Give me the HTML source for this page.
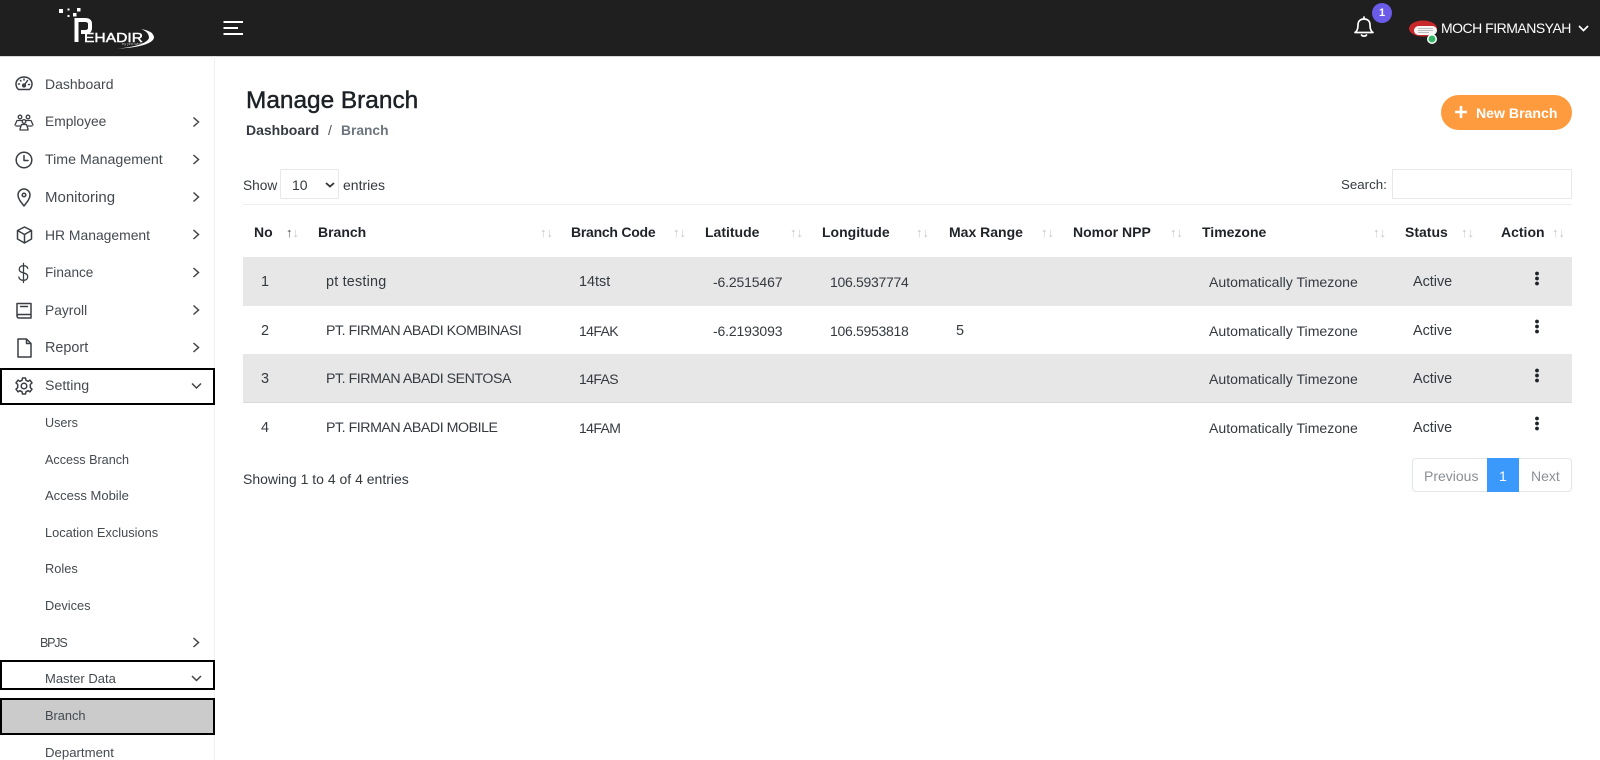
<!DOCTYPE html>
<html><head><meta charset="utf-8"><title>Manage Branch</title>
<style>
html,body{margin:0;padding:0;width:1600px;height:760px;overflow:hidden;background:#fff;font-family:"Liberation Sans",sans-serif;font-size:14.4px;color:#343a40}
body{filter:blur(.3px)}
.a{position:absolute}
.t{position:absolute;white-space:nowrap;line-height:20px;height:20px}
.s{color:#444a50}
.th{font-weight:bold;color:#1f2328;font-size:14px}
.ar{position:absolute;white-space:nowrap;color:#c3c7cb;font-size:13px;line-height:20px;letter-spacing:0;top:223px}
.pt{font-size:14.2px;letter-spacing:-.46px}
.tz{font-size:14.1px}
.nm{font-size:14px;letter-spacing:-.3px}
.la{font-size:14px;letter-spacing:-.15px}
.cd{font-size:14px;letter-spacing:-.6px}
svg{position:absolute;overflow:visible}
.i{fill:none;stroke:#3a3f44;stroke-width:1.5;stroke-linecap:round;stroke-linejoin:round}
</style></head><body>
<div class="a" style="left:0;top:0;width:1600px;height:57px;background:#1f1f1f;border-bottom:1px solid #d8d8d8;box-sizing:border-box"></div>
<svg style="left:0;top:0" width="260" height="56">
<g fill="#fff"><rect x="59" y="9" width="4" height="4"/><rect x="67.500" y="8.500" width="2" height="2"/><rect x="77" y="8" width="3.500" height="3.500"/><rect x="67.500" y="15" width="2" height="2"/><rect x="73" y="13" width="3.500" height="3.500"/></g>
<path d="M76.500 42V20H85Q90 20 90 24V28Q90 32 85 32H81" fill="none" stroke="#fff" stroke-width="4"/>
<text x="84" y="42" font-family="Liberation Sans" font-size="12.500" fill="#fff" stroke="#fff" stroke-width=".4" textLength="59" lengthAdjust="spacingAndGlyphs">EHADIR</text>
<path d="M141 29Q154 31 154 38Q151 47 115 49Q146 46 149 38Q149 32 141 29Z" fill="#fff"/>
<text x="122" y="45" font-family="Liberation Sans" font-size="4" fill="#bbb">by pro-wish</text>
<path d="M223.500 22H243M223.500 28H238M223.500 34H243" stroke="#fff" stroke-width="2" fill="none"/>
</svg>
<svg style="left:1354px;top:16px" width="20" height="22" viewBox="0 0 20 22"><path class="i" style="stroke:#fff;stroke-width:1.700" d="M1 16.500C3.500 15 4 12.500 4 9C4 5 6.500 3 10 3C13.500 3 16 5 16 9C16 12.500 16.500 15 19 16.500ZM10 1V3M7.500 19C8.500 20.500 11.500 20.500 12.500 19"/></svg>
<div class="a" style="left:1372px;top:3px;width:20px;height:20px;border-radius:50%;background:#6a5ce8;color:#fff;font-weight:bold;font-size:11px;line-height:20px;text-align:center">1</div>
<svg style="left:1409px;top:20px" width="30" height="24"><ellipse cx="14" cy="8.500" rx="14" ry="8" fill="#c8282a"/><rect x="5" y="6" width="23" height="9" rx="4.500" fill="#f6f6f6"/><path d="M9 8.500H24M9 10.500H24M9 12.500H20" stroke="#aaa" stroke-width=".8"/><circle cx="23" cy="19" r="5" fill="#fff"/><circle cx="23" cy="19" r="3.500" fill="#35b667"/></svg>
<div class="t" style="left:1441px;top:18px;color:#fff;font-size:14px;letter-spacing:-.5px">MOCH FIRMANSYAH</div>
<svg style="left:1578px;top:25px" width="11" height="7"><path d="M1 1L5.500 5.500L10 1" stroke="#fff" stroke-width="1.700" fill="none"/></svg>

<div class="a" style="left:214px;top:56px;width:1px;height:704px;background:#f0f0f0"></div>
<div class="a" style="left:0;top:368px;width:215px;height:37px;border:2px solid #000;box-sizing:border-box"></div>
<div class="a" style="left:0;top:660px;width:215px;height:30px;border:2px solid #000;box-sizing:border-box"></div>
<div class="a" style="left:0;top:698px;width:215px;height:37px;border:2px solid #000;box-sizing:border-box;background:#cbcbcb"></div>

<div class="t s" style="left:45px;top:74px;font-size:14px">Dashboard</div>
<div class="t s" style="left:45px;top:112px;font-size:13.8px">Employee</div>
<div class="t s" style="left:45px;top:150px;font-size:14.2px">Time Management</div>
<div class="t s" style="left:45px;top:188px;font-size:15px">Monitoring</div>
<div class="t s" style="left:45px;top:225px;font-size:13.9px">HR Management</div>
<div class="t s" style="left:45px;top:263px;font-size:13.6px">Finance</div>
<div class="t s" style="left:45px;top:301px;font-size:13.8px">Payroll</div>
<div class="t s" style="left:45px;top:338px;font-size:14.4px">Report</div>
<div class="t s" style="left:45px;top:376px;font-size:14.2px">Setting</div>
<div class="t s" style="left:45px;top:413px;font-size:12.6px">Users</div>
<div class="t s" style="left:45px;top:450px;font-size:12.6px">Access Branch</div>
<div class="t s" style="left:45px;top:486px;font-size:13px">Access Mobile</div>
<div class="t s" style="left:45px;top:523px;font-size:12.8px">Location Exclusions</div>
<div class="t s" style="left:45px;top:559px;font-size:12.8px">Roles</div>
<div class="t s" style="left:45px;top:596px;font-size:12.8px">Devices</div>
<div class="t s" style="left:40px;top:633px;font-size:12.5px;letter-spacing:-1.2px">BPJS</div>
<div class="t s" style="left:45px;top:669px;font-size:13px">Master Data</div>
<div class="t s" style="left:45px;top:706px;font-size:12.8px">Branch</div>
<div class="t s" style="left:45px;top:743px;font-size:13.2px">Department</div>

<svg style="left:15px;top:74px" width="18" height="18" viewBox="0 0 18 18"><path class="i" d="M3.500 15.500C1.800 14 1 12 1 10C1 6 4.500 3 9 3C13.500 3 17 6 17 10C17 12 16.200 14 14.500 15.500ZM9 11.500L12.500 6.500M3.500 10H4.500M13.500 10.500H14.500M9 5V6M5.500 6.500L6 7"/><circle cx="9" cy="11.500" r="1.400" class="i"/></svg>
<svg style="left:14px;top:114px" width="20" height="17" viewBox="0 0 20 17"><g class="i" style="stroke-width:1.300"><circle cx="6" cy="3" r="1.800"/><circle cx="14" cy="3" r="1.800"/><circle cx="10" cy="7.500" r="1.800"/><path d="M1 11L3 6.500H8M12 6.500H17L19 11M2 12H6M14 12H18M6 15L7.500 10.500H12.500L14 15V16H6Z"/></g></svg>
<svg style="left:15px;top:151px" width="18" height="18" viewBox="0 0 18 18"><circle cx="9" cy="9" r="7.800" class="i"/><path class="i" d="M9 4.500V9.500H13"/></svg>
<svg style="left:17px;top:188px" width="14" height="19" viewBox="0 0 14 19"><path class="i" d="M7 18C3.500 13.500 1 10.500 1 7A6 6 0 0 1 13 7C13 10.500 10.500 13.500 7 18Z"/><circle class="i" cx="7" cy="7" r="1.800"/></svg>
<svg style="left:16px;top:226px" width="17" height="18" viewBox="0 0 17 18"><path class="i" d="M8.500 1L15.500 4.500V13L8.500 17L1.500 13V4.500ZM1.500 4.500L8.500 8.500L15.500 4.500M8.500 8.500V17"/></svg>
<svg style="left:18px;top:263px" width="11" height="20" viewBox="0 0 13 22" preserveAspectRatio="none"><path class="i" d="M11.500 6C11 3.800 9 3 6.500 3C3.500 3 1.500 4.500 1.500 7C1.500 12 11.500 9.500 11.500 15C11.500 17.500 9.500 19 6.500 19C3.500 19 1.500 17.800 1 15.500M6.500 .5V21.500"/></svg>
<svg style="left:16px;top:302px" width="16" height="17" viewBox="0 0 16 17"><path class="i" d="M1 13.500V1.500H15V16H3A2 2 0 0 1 1 14A2 2 0 0 1 3 12.500H15M4.500 4.500H11.500"/></svg>
<svg style="left:17px;top:338px" width="15" height="20" viewBox="0 0 15 20"><path class="i" d="M1 1H9.500L14 5.500V19H1ZM9.500 1V5.500H14"/></svg>
<svg style="left:15px;top:377px" width="18" height="18" viewBox="0 0 18 18"><circle class="i" cx="9" cy="9" r="2.800"/><path class="i" d="M7.500 1H10.500L11 3.300L13 4.300L15 3.200L17 5.800L15.300 7.500V10.500L17 12.200L15 14.800L13 13.700L11 14.700L10.500 17H7.500L7 14.700L5 13.700L3 14.800L1 12.200L2.700 10.500V7.500L1 5.800L3 3.200L5 4.300L7 3.300Z"/></svg>

<svg style="left:0;top:0" width="215" height="760"><g fill="none" stroke="#444" stroke-width="1.500"><path d="M193.500 117.500L198.500 122L193.500 126.500M193.500 155L198.500 159.500L193.500 164M193.500 192.500L198.500 197L193.500 201.500M193.500 230L198.500 234.500L193.500 239M193.500 268L198.500 272.500L193.500 277M193.500 305.500L198.500 310L193.500 314.500M193.500 343L198.500 347.500L193.500 352M193.500 638L198.500 642.500L193.500 647M192 383.500L196.500 388L201 383.500M192 676L196.500 680.500L201 676"/></g></svg>

<div class="t" style="left:246px;top:90px;font-size:24.4px;line-height:22px;height:22px;color:#1c2126;-webkit-text-stroke:.45px #1c2126">Manage Branch</div>
<div class="t" style="left:246px;top:120px;font-weight:bold;font-size:14px;color:#343a40">Dashboard</div>
<div class="t" style="left:328px;top:120px;color:#555;font-size:14px">/</div>
<div class="t" style="left:341px;top:121px;font-weight:bold;font-size:13.8px;color:#6c757d">Branch</div>

<div class="a" style="left:1441px;top:95px;width:131px;height:35px;border-radius:18px;background:#fd9b3e"></div>
<svg style="left:1455px;top:106px" width="12" height="12"><path d="M6 0V12M0 6H12" stroke="#fff" stroke-width="2.600"/></svg>
<div class="t" style="left:1476px;top:103px;color:#fff;font-weight:bold;font-size:14.1px">New Branch</div>

<div class="t" style="left:243px;top:176px;font-size:13.7px">Show</div>
<div class="a" style="left:280px;top:169px;width:59px;height:30px;border:1px solid #e6e8ea;box-sizing:border-box;border-radius:2px"></div>
<div class="t" style="left:292px;top:175px;font-size:14px">10</div>
<svg style="left:325px;top:182px" width="10" height="6"><path d="M1 1L5 4.500L9 1" stroke="#333" stroke-width="1.800" fill="none"/></svg>
<div class="t" style="left:343px;top:175px;font-size:14px">entries</div>
<div class="t" style="left:1341px;top:175px;font-size:13.3px">Search:</div>
<div class="a" style="left:1392px;top:169px;width:180px;height:30px;border:1px solid #e6e8ea;box-sizing:border-box"></div>
<div class="a" style="left:243px;top:204px;width:1329px;height:1px;background:#eceeef"></div>

<div class="t th" style="left:254px;top:222px">No</div>
<div class="t th" style="left:318px;top:222px">Branch</div>
<div class="t th" style="left:571px;top:222px;font-size:14px;letter-spacing:-.25px">Branch Code</div>
<div class="t th" style="left:705px;top:222px">Latitude</div>
<div class="t th" style="left:822px;top:222px">Longitude</div>
<div class="t th" style="left:949px;top:222px">Max Range</div>
<div class="t th" style="left:1073px;top:222px">Nomor NPP</div>
<div class="t th" style="left:1202px;top:222px">Timezone</div>
<div class="t th" style="left:1405px;top:222px">Status</div>
<div class="t th" style="left:1501px;top:222px">Action</div>
<div class="ar" style="left:286px"><span style="color:#555">↑</span>↓</div>
<div class="ar" style="left:540px">↑↓</div>
<div class="ar" style="left:673px">↑↓</div>
<div class="ar" style="left:790px">↑↓</div>
<div class="ar" style="left:916px">↑↓</div>
<div class="ar" style="left:1041px">↑↓</div>
<div class="ar" style="left:1170px">↑↓</div>
<div class="ar" style="left:1373px">↑↓</div>
<div class="ar" style="left:1461px">↑↓</div>
<div class="ar" style="left:1552px">↑↓</div>

<div class="a" style="left:243px;top:257px;width:1329px;height:49px;background:#e7e7e7"></div>
<div class="a" style="left:243px;top:354px;width:1329px;height:49px;background:#e7e7e7;border-bottom:1px solid #d8dbde;box-sizing:border-box"></div>

<div class="t" style="left:261px;top:272px">1</div>
<div class="t" style="left:326px;top:272px;font-size:14.4px;letter-spacing:.2px">pt testing</div>
<div class="t" style="left:579px;top:272px">14tst</div>
<div class="t la" style="left:713px;top:272px">-6.2515467</div>
<div class="t nm" style="left:830px;top:272px">106.5937774</div>
<div class="t tz" style="left:1209px;top:272px">Automatically Timezone</div>
<div class="t" style="left:1413px;top:272px">Active</div>

<div class="t" style="left:261px;top:321px">2</div>
<div class="t pt" style="left:326px;top:321px">PT. FIRMAN ABADI KOMBINASI</div>
<div class="t cd" style="left:579px;top:321px">14FAK</div>
<div class="t la" style="left:713px;top:321px">-6.2193093</div>
<div class="t nm" style="left:830px;top:321px">106.5953818</div>
<div class="t" style="left:956px;top:321px">5</div>
<div class="t tz" style="left:1209px;top:321px">Automatically Timezone</div>
<div class="t" style="left:1413px;top:321px">Active</div>

<div class="t" style="left:261px;top:369px">3</div>
<div class="t pt" style="left:326px;top:369px">PT. FIRMAN ABADI SENTOSA</div>
<div class="t cd" style="left:579px;top:369px">14FAS</div>
<div class="t tz" style="left:1209px;top:369px">Automatically Timezone</div>
<div class="t" style="left:1413px;top:369px">Active</div>

<div class="t" style="left:261px;top:418px">4</div>
<div class="t pt" style="left:326px;top:418px">PT. FIRMAN ABADI MOBILE</div>
<div class="t cd" style="left:579px;top:418px">14FAM</div>
<div class="t tz" style="left:1209px;top:418px">Automatically Timezone</div>
<div class="t" style="left:1413px;top:418px">Active</div>

<svg style="left:1533px;top:270px" width="8" height="170" fill="#1f2328">
<circle cx="4" cy="3.500" r="1.900"/><circle cx="4" cy="8.500" r="1.900"/><circle cx="4" cy="13.500" r="1.900"/>
<circle cx="4" cy="51.500" r="1.900"/><circle cx="4" cy="56.500" r="1.900"/><circle cx="4" cy="61.500" r="1.900"/>
<circle cx="4" cy="100.500" r="1.900"/><circle cx="4" cy="105.500" r="1.900"/><circle cx="4" cy="110.500" r="1.900"/>
<circle cx="4" cy="148.500" r="1.900"/><circle cx="4" cy="153.500" r="1.900"/><circle cx="4" cy="158.500" r="1.900"/>
</svg>

<div class="t" style="left:243px;top:469px;font-size:14px">Showing 1 to 4 of 4 entries</div>
<div class="a" style="left:1412px;top:458px;width:160px;height:34px;border:1px solid #e4e6e8;border-radius:4px;box-sizing:border-box"></div>
<div class="a" style="left:1487px;top:458px;width:32px;height:34px;background:#3a99fb"></div>
<div class="t" style="left:1424px;top:466px;color:#8a9096;font-size:14px">Previous</div>
<div class="t" style="left:1499px;top:466px;color:#fff;font-size:14px">1</div>
<div class="t" style="left:1531px;top:466px;color:#8a9096;font-size:14px">Next</div>
</body></html>
